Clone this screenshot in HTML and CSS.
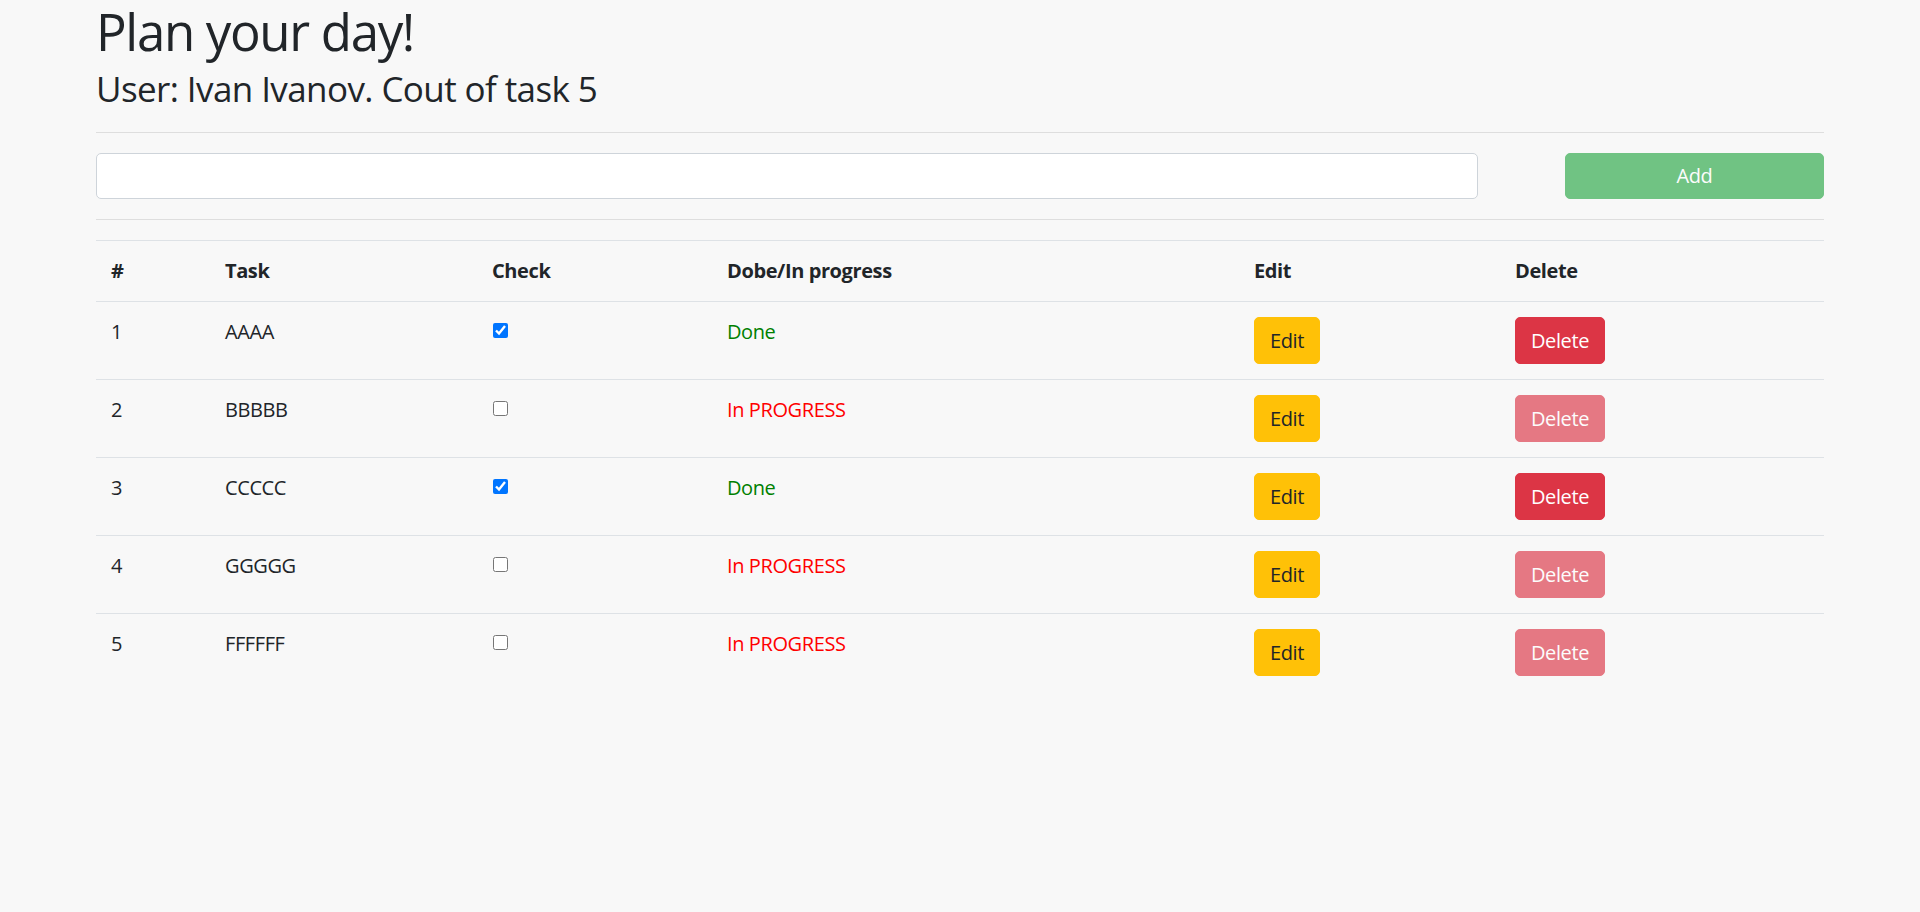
FILE: index.html
```html
<!DOCTYPE html>
<html lang="en">
<head>
<meta charset="utf-8">
<title>Plan your day!</title>
<link rel="stylesheet" href="styles.css">
</head>
<body>
<div class="container">
  <h1 class="title">Plan your day!</h1>
  <h3 class="subtitle">User: Ivan Ivanov. Cout of task 5</h3>
  <hr class="divider">
  <form class="add-form">
    <input class="task-input" type="text">
    <button class="btn btn-add" type="button" disabled>Add</button>
  </form>
  <hr class="divider">
  <table class="tasks">
    <thead>
      <tr>
        <th class="c-num">#</th>
        <th class="c-task">Task</th>
        <th class="c-check">Check</th>
        <th class="c-status">Dobe/In progress</th>
        <th class="c-edit">Edit</th>
        <th class="c-del">Delete</th>
      </tr>
    </thead>
    <tbody>
      <tr>
        <td>1</td><td>AAAA</td>
        <td><input class="check" type="checkbox" checked></td>
        <td class="done">Done</td>
        <td><button class="btn btn-edit" type="button">Edit</button></td>
        <td><button class="btn btn-delete" type="button">Delete</button></td>
      </tr>
      <tr>
        <td>2</td><td>BBBBB</td>
        <td><input class="check" type="checkbox"></td>
        <td class="progress">In PROGRESS</td>
        <td><button class="btn btn-edit" type="button">Edit</button></td>
        <td><button class="btn btn-delete" type="button" disabled>Delete</button></td>
      </tr>
      <tr>
        <td>3</td><td>CCCCC</td>
        <td><input class="check" type="checkbox" checked></td>
        <td class="done">Done</td>
        <td><button class="btn btn-edit" type="button">Edit</button></td>
        <td><button class="btn btn-delete" type="button">Delete</button></td>
      </tr>
      <tr>
        <td>4</td><td>GGGGG</td>
        <td><input class="check" type="checkbox"></td>
        <td class="progress">In PROGRESS</td>
        <td><button class="btn btn-edit" type="button">Edit</button></td>
        <td><button class="btn btn-delete" type="button" disabled>Delete</button></td>
      </tr>
      <tr>
        <td>5</td><td>FFFFFF</td>
        <td><input class="check" type="checkbox"></td>
        <td class="progress">In PROGRESS</td>
        <td><button class="btn btn-edit" type="button">Edit</button></td>
        <td><button class="btn btn-delete" type="button" disabled>Delete</button></td>
      </tr>
    </tbody>
  </table>
</div>
</body>
</html>
```
FILE: styles.css
```css
* { box-sizing: border-box; }

html, body { margin: 0; padding: 0; }

body {
  background: #f8f8f8;
  color: #212529;
  font-family: "Open Sans", "Noto Sans", sans-serif;
  font-size: 20px;
  line-height: 1.5;
  letter-spacing: -0.02em;
}

.container {
  width: 90%;
  margin: 0 auto;
  padding-top: 1px;
}

.title {
  font-size: 51px;
  font-weight: 400;
  line-height: 60px;
  letter-spacing: -0.026em;
  margin: 0 0 7px;
}

.subtitle {
  font-size: 35px;
  font-weight: 400;
  line-height: 42px;
  letter-spacing: -0.017em;
  margin: 0 0 22px;
}

.divider {
  border: 0;
  border-top: 1px solid rgba(0, 0, 0, 0.1);
  margin: 20px 0;
  height: 0;
}

.subtitle + .divider {
  margin-top: 22px;
}

.add-form {
  display: flex;
  justify-content: space-between;
  margin: 0;
}

.task-input {
  width: 80%;
  height: 46px;
  border: 1px solid #ced4da;
  border-radius: 5px;
  background: #fff;
  font: inherit;
  padding: 7px 15px;
}

.btn {
  font-family: inherit;
  font-size: 20px;
  line-height: 1.5;
  letter-spacing: -0.02em;
  height: 47px;
  padding: 7px 15px;
  border: 1px solid transparent;
  border-radius: 5px;
  cursor: pointer;
}

.btn-add {
  width: 15%;
  height: 46px;
  background: #28a745;
  border-color: #28a745;
  color: #fff;
  opacity: 0.65;
}

.btn-edit {
  background: #ffc107;
  border-color: #ffc107;
  color: #212529;
}

.btn-delete {
  background: #dc3545;
  border-color: #dc3545;
  color: #fff;
}

.btn-delete:disabled {
  opacity: 0.65;
}

.tasks {
  width: 100%;
  border-collapse: collapse;
}

.tasks th,
.tasks td {
  padding: 15px;
  text-align: left;
  vertical-align: top;
  border-top: 1px solid #dee2e6;
}

.tasks th {
  font-weight: 700;
  vertical-align: bottom;
}

.c-num { width: 114px; }
.c-task { width: 267px; }
.c-check { width: 235px; }
.c-status { width: 527px; }
.c-edit { width: 261px; }
.c-del { width: auto; }

.check {
  display: block;
  width: 15px;
  height: 15px;
  margin: 6px 0 0 1px;
}

.done { color: green; }
.progress { color: red; }
```
